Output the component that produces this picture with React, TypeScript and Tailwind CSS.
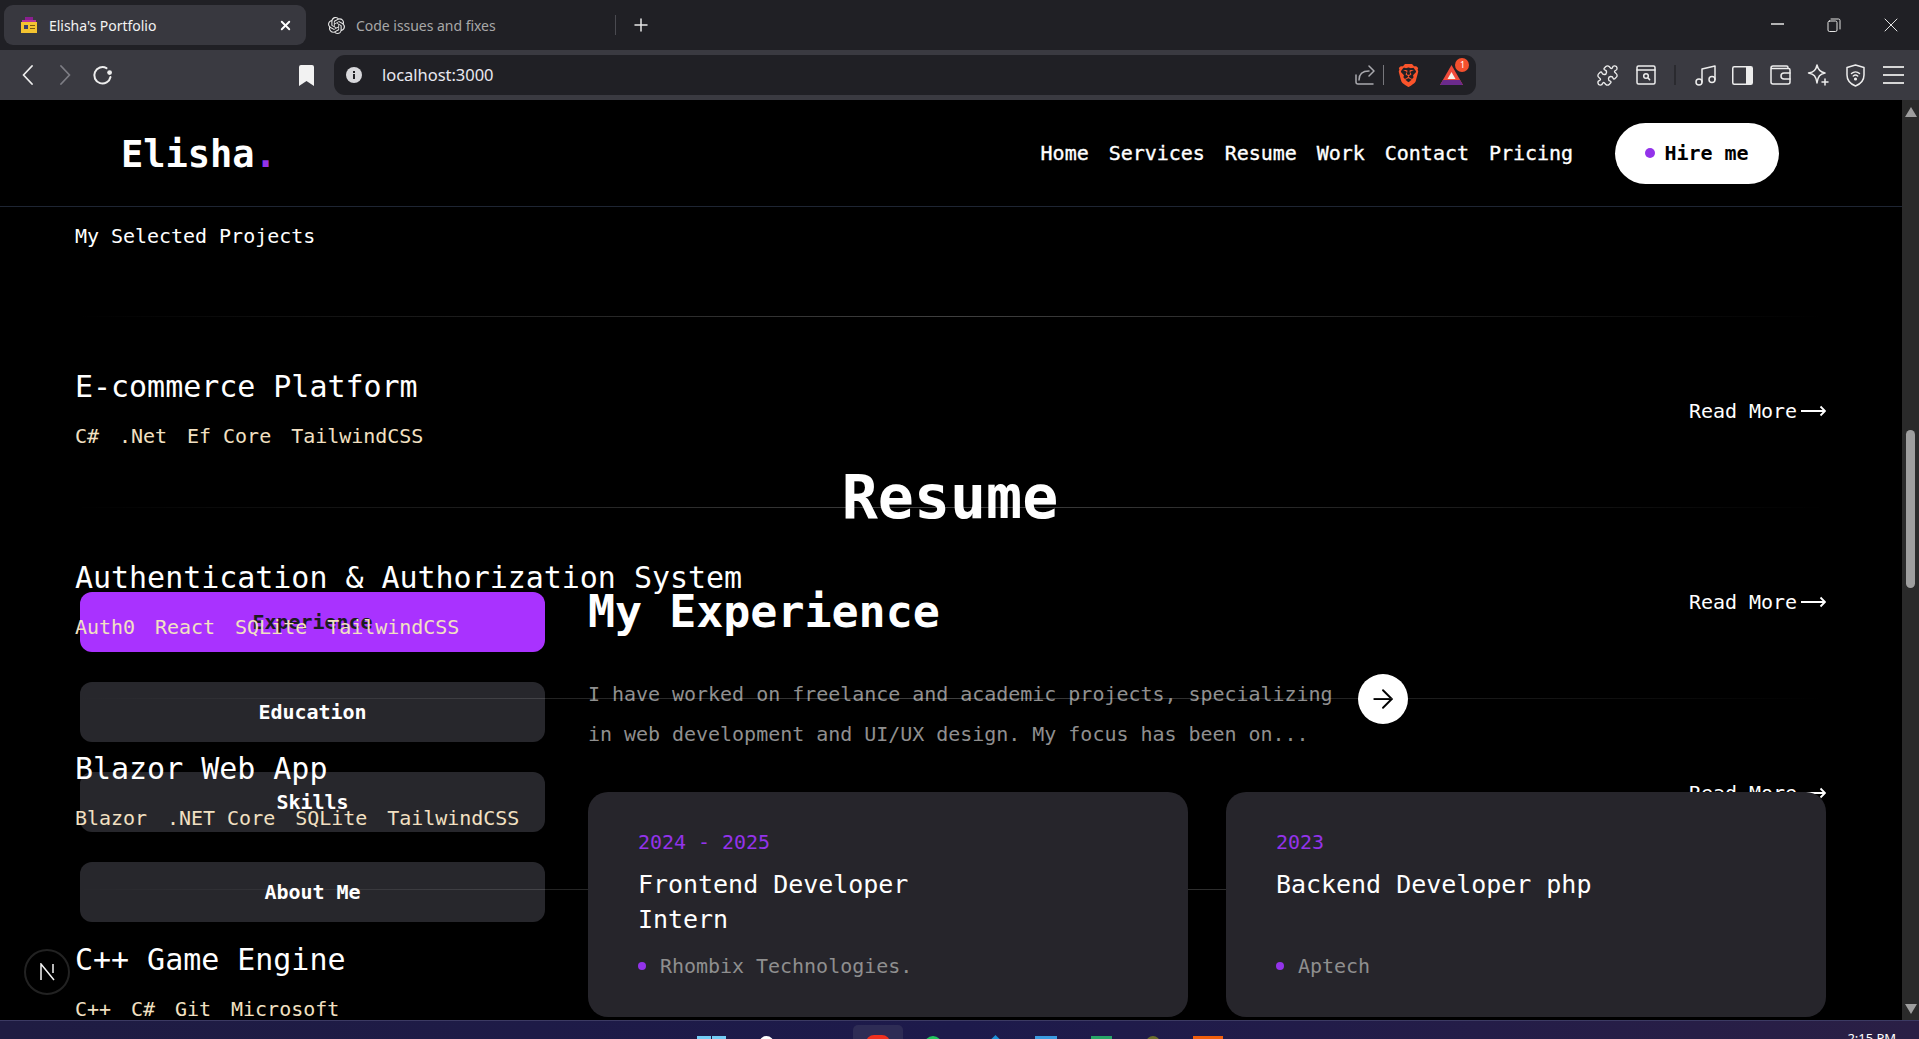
import React from "react";
import { ArrowRight, Puzzle, X } from "lucide-react";
import { SiBrave, SiOpenai } from "react-icons/si";

const projects = [
  { title: "E-commerce Platform", tags: ["C#", ".Net", "Ef Core", "TailwindCSS"] },
  { title: "Authentication & Authorization System", tags: ["Auth0", "React", "SQLite", "TailwindCSS"] },
  { title: "Blazor Web App", tags: ["Blazor", ".NET Core", "SQLite", "TailwindCSS"] },
  { title: "C++ Game Engine", tags: ["C++", "C#", "Git", "Microsoft"] },
];

const navLinks = ["Home", "Services", "Resume", "Work", "Contact", "Pricing"];
const resumeTabs = ["Experience", "Education", "Skills", "About Me"];

const experience = [
  { date: "2024 - 2025", role: "Frontend Developer Intern", place: "Rhombix Technologies." },
  { date: "2023", role: "Backend Developer php", place: "Aptech" },
];

const Stroke: React.FC<{ w: number; h: number; box?: string; className?: string; children: React.ReactNode }> = ({
  w,
  h,
  box,
  className,
  children,
}) => (
  <svg
    width={w}
    height={h}
    viewBox={box ?? `0 0 ${w} ${h}`}
    fill="none"
    stroke="currentColor"
    strokeWidth={1.5}
    strokeLinecap="round"
    strokeLinejoin="round"
    className={className}
  >
    {children}
  </svg>
);

const TabStrip = () => (
  <div className="h-[50px] shrink-0 flex items-center bg-[#202025] font-['Noto_Sans',sans-serif]">
    <div className="ml-[4px] w-[302px] h-[40px] flex items-center rounded-[9px] bg-[#38383f] pl-[17px] pr-[13px]">
      <svg width="16" height="16" viewBox="0 0 16 16" className="shrink-0">
        <rect x="4" y="0" width="8" height="4" fill="#8a1f8f" />
        <rect x="1" y="3" width="14" height="3" fill="#b5359b" />
        <rect x="0" y="5" width="16" height="11" fill="#f4c430" />
        <rect x="3" y="8" width="4" height="4" fill="#3a3f6b" />
        <rect x="9" y="8" width="5" height="1" fill="#7a5a10" />
        <rect x="9" y="11" width="5" height="1" fill="#7a5a10" />
      </svg>
      <span className="ml-[12px] text-[14px] text-[#f3f3f3]">Elisha's Portfolio</span>
      <X size={15} strokeWidth={3} className="ml-auto text-white" />
    </div>
    <SiOpenai size={17} className="ml-[22px] text-[#e8e8e8]" />
    <span className="ml-[11px] text-[14px] text-[#a8a8a8]">Code issues and fixes</span>
    <div className="ml-[119px] w-px h-[20px] bg-[#4a4a50]" />
    <Stroke w={14} h={14} className="ml-[18px] text-[#e6e6e6]">
      <path d="M7 1v12M1 7h12" />
    </Stroke>
    <div className="ml-auto flex items-center gap-[43px] pr-[21px] text-[#e4e4e4]">
      <Stroke w={13} h={14} className="-mt-[2px]">
        <path d="M0 7h13" strokeLinecap="butt" />
      </Stroke>
      <Stroke w={14} h={14} box="0 0 14 14">
        <rect x="1" y="3" width="9" height="10.5" rx="1.5" strokeWidth={1} />
        <path d="M4 1h7.5A1.5 1.5 0 0 1 13 2.5V11" strokeWidth={1} />
      </Stroke>
      <Stroke w={14} h={14}>
        <path d="M1 1l12 12M13 1L1 13" strokeWidth={1} />
      </Stroke>
    </div>
  </div>
);

const Toolbar = () => (
  <div className="h-[50px] shrink-0 flex items-center bg-[#3a3a41] pl-[22px] text-[#ededed] font-['Noto_Sans',sans-serif]">
    <Stroke w={11} h={20}>
      <path d="M10 1L1.5 10 10 19" strokeWidth={1.8} />
    </Stroke>
    <Stroke w={11} h={20} className="ml-[27px] text-[#7d7d84]">
      <path d="M1 1l8.5 9L1 19" strokeWidth={1.8} />
    </Stroke>
    <Stroke w={21} h={21} box="0 0 21 21" className="ml-[21px]">
      <path d="M14.5 3.2A8.2 8.2 0 1 0 18.5 12" strokeWidth={2} />
      <circle cx="17.6" cy="7.6" r="2.4" fill="currentColor" stroke="none" />
    </Stroke>
    <svg width="15" height="21" viewBox="0 0 15 21" className="ml-[186px]">
      <path d="M0 2a2 2 0 0 1 2-2h11a2 2 0 0 1 2 2v19l-7.5-5L0 21z" fill="#f2f2f2" />
    </svg>
    <div className="ml-[20px] w-[1142px] h-[40px] flex items-center rounded-[11px] bg-[#202025] pl-[12px]">
      <svg width="16" height="16" viewBox="0 0 16 16">
        <circle cx="8" cy="8" r="8" fill="#d8d8dc" />
        <rect x="7" y="7" width="2" height="5" fill="#202025" />
        <rect x="7" y="4" width="2" height="2" fill="#202025" />
      </svg>
      <span className="ml-[20px] text-[16.5px] text-[#e8e8f0]">localhost:3000</span>
      <Stroke w={20} h={20} className="ml-[862px] text-[#a9a9ae]">
        <path d="M1 10v7a2 2 0 0 0 2 2h15" />
        <path d="M4 15c0-6 4-9 10-9M14 1l5 5-5 5" />
      </Stroke>
      <div className="ml-[8px] w-px h-[20px] bg-[#77777c]" />
      <SiBrave size={23} className="ml-[13px] text-[#fb542b]" />
      <div className="relative ml-[20px] w-[23px] h-[20px]">
        <svg width="23" height="20" viewBox="0 0 23 20">
          <path d="M11.5 0L23 20H0z" fill="#f04a3a" />
          <path d="M0 20h23l-3-5H3z" fill="#6b2a8c" />
          <path d="M11.5 7l4 7h-8z" fill="#f5f0ea" />
        </svg>
        <span className="absolute -top-[7px] -right-[6px] w-[14px] h-[14px] rounded-full bg-[#f4502e] text-white text-[9px] leading-[14px] text-center">
          1
        </span>
      </div>
    </div>
    <Puzzle size={23} strokeWidth={1.4} className="ml-[120px] text-[#ececec]" />
    <Stroke w={20} h={20} className="ml-[17px]">
      <rect x="1" y="1" width="18" height="18" rx="1.5" />
      <path d="M1 5h18" />
      <circle cx="10" cy="11" r="2.3" />
      <path d="M12 13l1.6 1.6" />
    </Stroke>
    <div className="ml-[18px] w-[2px] h-[20px] bg-[#2a2a2f]" />
    <Stroke w={21} h={22} className="ml-[19px]">
      <circle cx="4" cy="18" r="3" />
      <circle cx="17" cy="15.5" r="3" />
      <path d="M7 18V5l13-3v13.5" />
    </Stroke>
    <svg width="21" height="19" viewBox="0 0 21 19" className="ml-[16px]">
      <rect x="0.75" y="0.75" width="19.5" height="17.5" rx="1.5" fill="none" stroke="#ececec" strokeWidth="1.5" />
      <rect x="14" y="1" width="6" height="17" fill="#ececec" />
    </svg>
    <Stroke w={21} h={20} className="ml-[17px]">
      <path d="M18 3.5V2.5A1.5 1.5 0 0 0 16.5 1H3a2 2 0 0 0-2 2v14a2 2 0 0 0 2 2h15a2 2 0 0 0 2-2V5a1.5 1.5 0 0 0-1.5-1.5H1" />
      <path d="M20 8h-6a2.5 2.5 0 0 0 0 6h6" />
    </Stroke>
    <Stroke w={22} h={22} className="ml-[16px]">
      <path d="M10 1c1 5 3 7 8 8-5 1-7 3-8 10-1-7-3-9-8.5-10C7 8 9 6 10 1z" />
      <path d="M18 15v6M15 18h6" />
    </Stroke>
    <Stroke w={19} h={23} className="ml-[17px]">
      <path d="M9.5 1L18 3.5V11c0 5.500-3.500 9-8.500 11C4.500 20 1 16.500 1 11V3.500z" />
      <path d="M5.500 9.500a6 6 0 0 1 8 0M7.300 12a3.400 3.400 0 0 1 4.400 0" />
      <circle cx="9.500" cy="15" r="0.8" fill="currentColor" />
    </Stroke>
    <Stroke w={21} h={20} className="ml-[18px] text-[#d6d6d6]">
      <path d="M0 2h21M0 10h21M0 18h21" strokeWidth={2} strokeLinecap="butt" />
    </Stroke>
  </div>
);

const SiteHeader = () => (
  <header className="[grid-area:1/1] self-start z-30 h-[107px] flex items-center justify-between bg-black border-b border-[#1e2533] pl-[121px] pr-[123px]">
    <h1 className="mt-[2px] text-[37px] leading-none font-semibold text-white">
      Elisha<span className="text-[#9333ea]">.</span>
    </h1>
    <nav className="flex items-center gap-[20px] text-[20px] text-white [-webkit-text-stroke:0.35px]">
      {navLinks.map((link) => (
        <a key={link}>{link}</a>
      ))}
      <button className="ml-[22px] w-[164px] h-[61px] flex items-center justify-center gap-[9px] rounded-full bg-white text-black font-semibold [-webkit-text-stroke:0]">
        <span className="w-[10px] h-[10px] rounded-full bg-[#9333ea]" />
        Hire me
      </button>
    </nav>
  </header>
);

const ProjectsLayer = () => (
  <section className="[grid-area:1/1] z-10 pl-[75px] pr-[76px] pt-[122px]">
    <p className="h-[94px] text-[20px] leading-[28px] text-white">My Selected Projects</p>
    {projects.map((project) => (
      <div key={project.title} className="h-[191px]">
        <div className="h-px bg-gradient-to-r from-transparent via-white/25 to-transparent" />
        <div className="pt-[50px] flex items-center justify-between">
          <div>
            <h3 className="text-[30px] leading-[40px] text-white">{project.title}</h3>
            <div className="mt-[15px] flex gap-[20px] text-[20px] leading-[28px] text-[#f2e0c2]">
              {project.tags.map((tag) => (
                <span key={tag}>{tag}</span>
              ))}
            </div>
          </div>
          <a className="mt-[5px] flex items-center gap-[4px] text-[20px] text-white">
            Read More
            <svg width="25" height="12" viewBox="0 0 25 12" fill="none" stroke="white" strokeWidth="1.8">
              <path d="M0 6h24M19.500 1.500l4.500 4.500-4.500 4.500" />
            </svg>
          </a>
        </div>
      </div>
    ))}
  </section>
);

const ResumeLayer = () => (
  <section className="[grid-area:1/1] pt-[367px] pl-[80px] pr-[76px]">
    <h2 className="pr-[6px] text-center text-[60px] leading-[60px] font-bold text-white">Resume</h2>
    <div className="mt-[65px] flex gap-[43px]">
      <div className="w-[465px] shrink-0 flex flex-col gap-[30px]">
        {resumeTabs.map((tab, i) => (
          <button
            key={tab}
            className={
              i === 0
                ? "h-[60px] rounded-[12px] bg-[#a932ff] text-[20px] font-semibold text-[#1c1c22]"
                : "h-[60px] rounded-[12px] bg-[#27272c] text-[20px] font-semibold text-white"
            }
          >
            {tab}
          </button>
        ))}
      </div>
      <div>
        <h2 className="h-[40px] text-[45px] leading-[40px] font-bold text-white">My Experience</h2>
        <div className="mt-[42px] flex items-start">
          <p className="w-[770px] text-[20px] leading-[40px] text-[#8f8f8f]">
            I have worked on freelance and academic projects, specializing
            <br />
            in web development and UI/UX design. My focus has been on...
          </p>
          <div className="w-[50px] h-[50px] rounded-full bg-white flex items-center justify-center text-black">
            <ArrowRight size={30} strokeWidth={1.5} />
          </div>
        </div>
      </div>
    </div>
  </section>
);

const CardsLayer = () => (
  <section className="[grid-area:1/1] z-20 self-start pt-[692px] pl-[588px] pr-[76px] grid grid-cols-2 gap-[38px]">
    {experience.map((item) => (
      <div key={item.date} className="h-[225px] rounded-[20px] bg-[#26252b] px-[50px] pt-[36px]">
        <p className="text-[20px] leading-[28px] text-[#9333ea]">{item.date}</p>
        <h3 className="mt-[11px] h-[70px] max-w-[340px] text-[25px] leading-[35px] text-white">{item.role}</h3>
        <div className="mt-[15px] flex items-center gap-[14px] text-[20px] leading-[28px] text-[#8f8f8f]">
          <span className="w-[8px] h-[8px] rounded-full bg-[#9333ea]" />
          {item.place}
        </div>
      </div>
    ))}
  </section>
);

const PageScrollbar = () => (
  <div className="w-[17px] shrink-0 bg-[#2a2a2a] flex flex-col items-center pt-[7px] pb-[6px]">
    <div className="w-0 h-0 border-x-[6px] border-x-transparent border-b-[10px] border-b-[#9e9e9e]" />
    <div className="mt-[313px] w-[9px] h-[158px] rounded-full bg-[#9e9e9e]" />
    <div className="mt-auto w-0 h-0 border-x-[6px] border-x-transparent border-t-[10px] border-t-[#9e9e9e]" />
  </div>
);

const Taskbar = () => (
  <div className="h-[19px] shrink-0 overflow-hidden flex border-t border-[#3c3a63] bg-gradient-to-r from-[#1f1c42] via-[#1d1a4b] to-[#2a1f45] font-['Noto_Sans',sans-serif]">
    <div className="ml-[697px] mt-[15px] w-[14px] h-[20px] bg-[#74cdf5]" />
    <div className="ml-px mt-[15px] w-[14px] h-[20px] bg-[#74cdf5]" />
    <div className="ml-[33px] mt-[15px] w-[15px] h-[15px] rounded-full bg-white" />
    <div className="ml-[79px] mt-[4px] w-[50px] h-[30px] rounded-[5px] bg-[#2e2c55] flex justify-center">
      <div className="mt-[10px] w-[24px] h-[20px] rounded-t-[8px] bg-[#f0301e]" />
    </div>
    <div className="ml-[21px] mt-[15px] w-[18px] h-[18px] rounded-full border-[3px] border-[#22c55e]" />
    <div className="ml-[46px] mt-[17px] w-[15px] h-[15px] rotate-45 bg-[#1c8fd6]" />
    <div className="ml-[32px] mt-[15px] w-[22px] h-[15px] bg-[#3b9be0]" />
    <div className="ml-[34px] mt-[15px] w-[21px] h-[15px] bg-[#27a567]" />
    <div className="ml-[34px] mt-[15px] w-[14px] h-[14px] rounded-full bg-[#6d6f2c]" />
    <div className="ml-[33px] mt-[15px] w-[30px] h-[15px] bg-[#f25f0c]" />
    <span className="ml-auto mr-[23px] mt-[8px] text-[13px] leading-[18px] text-white">2:15 PM</span>
  </div>
);

export default function App() {
  return (
    <div className="h-screen w-full overflow-hidden flex flex-col bg-black tracking-[-0.002em] font-['DejaVu_Sans_Mono',monospace]">
      <TabStrip />
      <Toolbar />
      <div className="flex-1 min-h-0 flex">
        <main className="relative flex-1 min-w-0 overflow-hidden bg-black grid grid-cols-1 content-start">
          <ResumeLayer />
          <ProjectsLayer />
          <CardsLayer />
          <SiteHeader />
          <div className="absolute left-[24px] bottom-[25px] z-40 w-[46px] h-[46px] rounded-full bg-black border-2 border-[#222] flex items-center justify-center">
            <svg width="17" height="18" viewBox="0 0 17 18" fill="none" stroke="#f4f4f4" strokeWidth="1.5">
              <path d="M2 17V1l13 16M14 1v9" />
            </svg>
          </div>
        </main>
        <PageScrollbar />
      </div>
      <Taskbar />
    </div>
  );
}
